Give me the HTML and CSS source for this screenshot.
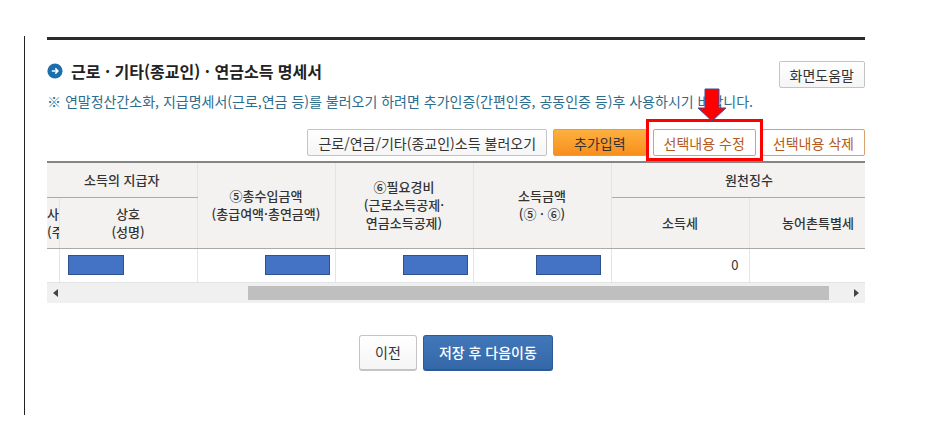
FILE: index.html
```
<!DOCTYPE html>
<html lang="ko">

<head>
    <meta charset="UTF-8">
    <meta name="viewport" content="width=device-width, initial-scale=1.0">
    <title>근로 · 기타(종교인) · 연금소득 명세서</title>
    <link rel="stylesheet" href="styles.css">
</head>

<body>
    <main class="page">
        <header class="title-row">
            <h1 class="title">
                <svg class="title-icon" viewBox="0 0 16 16" aria-hidden="true">
                    <circle cx="8" cy="8" r="7.6" fill="#1b6fae" />
                    <path d="M4.8 8h6M8.3 5.4 10.9 8l-2.6 2.6" fill="none" stroke="#fff" stroke-width="1.5" />
                </svg>
                근로 · 기타(종교인) · 연금소득 명세서
            </h1>
            <button type="button" class="btn">화면도움말</button>
        </header>

        <p class="notice">※ 연말정산간소화, 지급명세서(근로,연금 등)를 불러오기 하려면 추가인증(간편인증, 공동인증 등)후 사용하시기 바랍니다.</p>

        <div class="actions">
            <button type="button" class="btn">근로/연금/기타(종교인)소득 불러오기</button>
            <button type="button" class="btn btn-add">추가입력</button>
            <div class="callout">
                <button type="button" class="btn btn-line">선택내용 수정</button>
                <span class="callout-box"></span>
                <svg class="callout-arrow" viewBox="0 0 30 34" aria-hidden="true">
                    <path d="M8 1h14v19h7L15 33 1 20h7z" fill="#ff0000" stroke="#3a4f9a" />
                </svg>
            </div>
            <button type="button" class="btn btn-line">선택내용 삭제</button>
        </div>

        <div class="table-wrap">
            <table class="income-table">
                <colgroup>
                    <col class="col-id">
                    <col class="col-item" span="6">
                </colgroup>
                <thead>
                    <tr class="group-row">
                        <th colspan="2">소득의 지급자</th>
                        <th rowspan="2">⑤총수입금액<br>(총급여액·총연금액)</th>
                        <th rowspan="2">⑥필요경비<br>(근로소득공제·<br>연금소득공제)</th>
                        <th rowspan="2">소득금액<br>(⑤ · ⑥)</th>
                        <th colspan="2">원천징수</th>
                    </tr>
                    <tr class="sub-row">
                        <th class="clipped">사<br>(주</th>
                        <th>상호<br>(성명)</th>
                        <th>소득세</th>
                        <th>농어촌특별세</th>
                    </tr>
                </thead>
                <tbody>
                    <tr>
                        <td></td>
                        <td class="name"><span class="mask mask-name"></span></td>
                        <td class="amount"><span class="mask"></span></td>
                        <td class="amount"><span class="mask"></span></td>
                        <td><span class="mask"></span></td>
                        <td>0</td>
                        <td></td>
                    </tr>
                </tbody>
            </table>
        </div>
        <div class="scrollbar">
            <svg class="scroll-arrow" viewBox="0 0 5 8" aria-hidden="true"><path d="M5 0v8L0 4z" fill="#444" /></svg>
            <div class="scroll-track">
                <div class="scroll-thumb"></div>
            </div>
            <svg class="scroll-arrow" viewBox="0 0 5 8" aria-hidden="true"><path d="M0 0v8l5-4z" fill="#444" /></svg>
        </div>

        <footer class="nav-buttons">
            <button type="button" class="btn btn-prev">이전</button>
            <button type="button" class="btn btn-next">저장 후 다음이동</button>
        </footer>
    </main>
</body>

</html>
```
FILE: styles.css
```
* {
    box-sizing: border-box;
}

body {
    margin: 0;
    background-color: #fff;
    color: #333;
    font-family: "Noto Sans CJK KR", sans-serif;
    font-size: 13px;
    line-height: 18px;
}

.page {
    margin: 36px 76px 0 24px;
    padding: 1px 0 44px 22px;
    border-left: 1px solid #222;
}

.title-row {
    display: flex;
    justify-content: space-between;
    align-items: flex-start;
    padding-top: 21px;
    border-top: 3px solid #2b2b2f;
}

.title {
    display: flex;
    align-items: center;
    gap: 8px;
    margin: 0;
    color: #222;
    font-size: 16px;
    font-weight: 700;
    line-height: 20px;
    white-space: nowrap;
}

.title-icon {
    width: 16px;
    height: 16px;
}

.notice {
    margin: 4px 0 0;
    color: #2c6c8c;
    font-size: 14px;
    white-space: nowrap;
}

.btn {
    height: 27px;
    padding: 0 10px;
    border: 1px solid #c4c4c4;
    border-radius: 2px;
    background: linear-gradient(#fff, #f5f5f5);
    color: #333;
    font-family: inherit;
    font-size: 14px;
    font-weight: 400;
    line-height: 18px;
    white-space: nowrap;
    cursor: pointer;
}

.actions {
    display: flex;
    justify-content: flex-end;
    gap: 6px;
    margin-top: 19px;
}

.btn-add {
    padding: 0 20px;
    border-color: #f39a26;
    background: linear-gradient(#fdb040, #f78f1c);
}

.btn-line {
    border-color: #d8a070;
    background: #fff;
    color: #b45a20;
}

.callout {
    position: relative;
    display: flex;
}

.callout-box {
    position: absolute;
    inset: -10px -7px -5px -7px;
    border: 3px solid #ff0000;
    pointer-events: none;
}

.callout-arrow {
    position: absolute;
    top: -41px;
    left: 44px;
    width: 30px;
    height: 34px;
}

.table-wrap {
    margin-top: 5px;
    border-top: 2px solid #858585;
    overflow: hidden;
}

.income-table {
    width: calc(100% + 22px);
    table-layout: fixed;
    border-collapse: collapse;
}

.col-id {
    width: 12px;
}

.col-item {
    width: 138px;
}

th,
td {
    padding: 0;
    border-right: 1px solid #e4e4e4;
}

th {
    border-bottom: 1px solid #aaa;
    background-color: #f3f2f0;
    font-weight: 500;
    text-align: center;
}

.group-row {
    height: 34px;
}

.sub-row {
    height: 51px;
}

.clipped {
    overflow: hidden;
    text-align: left;
    white-space: nowrap;
}

td {
    height: 34px;
    padding-right: 10px;
    border-bottom: 1px solid #e4e4e4;
    text-align: right;
}

td:first-child {
    padding: 0;
}

td.name {
    padding-left: 8px;
    text-align: left;
}

td.amount {
    padding-right: 5px;
}

.mask {
    display: inline-block;
    width: 65px;
    height: 20px;
    border: 1px solid #2f528f;
    background-color: #4472c4;
    vertical-align: middle;
}

.mask-name {
    width: 56px;
}

.scrollbar {
    display: flex;
    align-items: center;
    justify-content: space-between;
    height: 20px;
    padding: 0 6px;
    background-color: #f0f0f0;
}

.scroll-arrow {
    width: 5px;
    height: 8px;
}

.scroll-track {
    flex: 1;
    margin: 0 25px 0 7px;
}

.scroll-thumb {
    width: 76%;
    height: 14px;
    margin-left: auto;
    background-color: #bfbfbf;
}

.nav-buttons {
    display: flex;
    justify-content: center;
    gap: 6px;
    margin-top: 32px;
}

.btn-prev,
.btn-next {
    height: 36px;
    padding: 0 15px;
    border-radius: 3px;
    border-bottom-width: 2px;
}

.btn-next {
    border-color: #2c5a98;
    background: linear-gradient(#4178ba, #3467a8);
    color: #fff;
    font-weight: 500;
}
```
